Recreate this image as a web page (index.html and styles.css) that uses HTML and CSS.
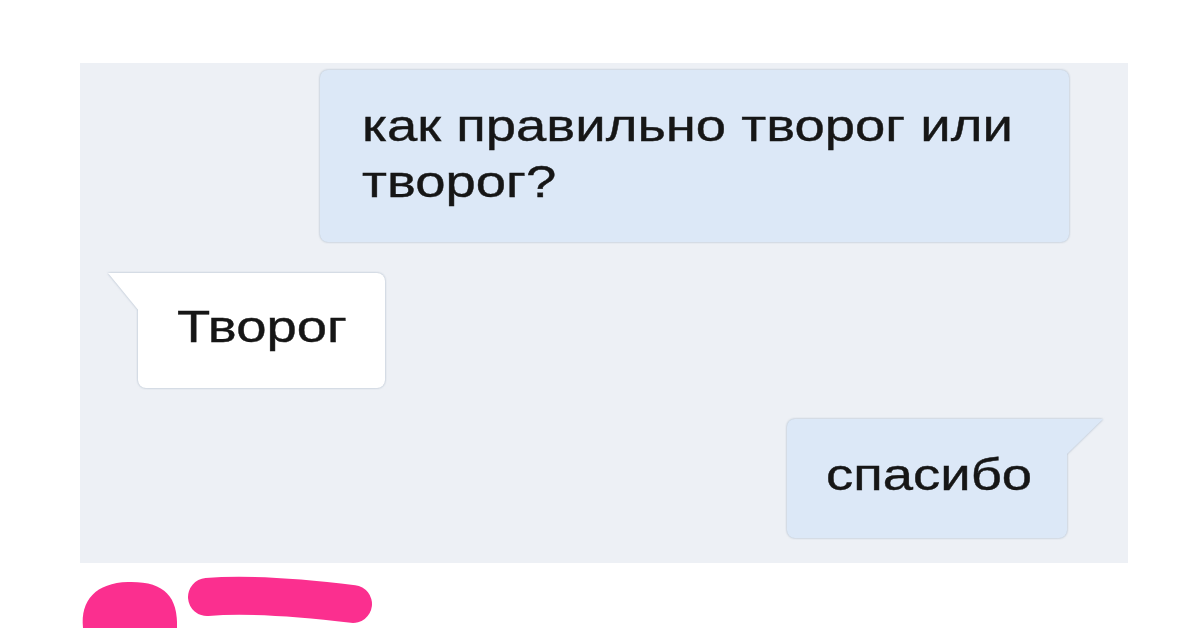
FILE: index.html
```html
<!DOCTYPE html>
<html lang="ru">
<head>
    <meta charset="UTF-8">
    <title>Творог</title>
    <link rel="stylesheet" href="styles.css">
</head>
<body>
    <div class="chat">
        <div class="row row-out">
            <div class="bubble bubble-out bubble-wide">
                <span class="text text-wrap">как правильно творог или творог?</span>
            </div>
        </div>
        <div class="row row-in">
            <div class="bubble bubble-in"><span class="text">Творог</span></div>
        </div>
        <div class="row row-out">
            <div class="bubble bubble-out bubble-tail"><span class="text">спасибо</span></div>
        </div>
    </div>
    <!-- pink marker over the hidden name -->
    <svg class="scribble" width="400" height="62" viewBox="0 0 400 62">
        <path d="M83 62 C80 34 96 17 128 16 C164 15 178 30 177 62 Z" fill="#fb2f8f"/>
        <path d="M207 31 C245 28 295 31 353 38" stroke="#fb2f8f" stroke-width="38" stroke-linecap="round" fill="none"/>
    </svg>
</body>
</html>
```

FILE: styles.css
```css
/* page is white, the chat is a grey panel */
body {
    margin: 0;
    background: #ffffff;
    font-family: 'Liberation Sans', Arial, sans-serif;
    color: #161616;
}
.chat {
    margin: 63px 72px 0 80px;
    height: 500px;
    box-sizing: border-box;
    padding: 7px 0 0 0;
    background: #edf0f5;
    display: flex;
    flex-direction: column;
    gap: 31px;
}
.row {
    display: flex;
}
.row-out {
    justify-content: flex-end;
}
.row-in {
    justify-content: flex-start;
}
.bubble {
    position: relative;
    box-sizing: border-box;
    border-radius: 8px;
    font-size: 45px;
    line-height: 56px;
    filter: drop-shadow(0 0 1px rgba(120, 140, 165, 0.6));
}
/* the screenshot is stretched sideways, so is the text */
.text {
    display: inline-block;
    transform: scaleX(1.21);
    transform-origin: left top;
    white-space: nowrap;
    -webkit-text-stroke: 0.4px #161616;
}
.text-wrap {
    white-space: normal;
    width: 560px;
}
.bubble-out {
    background: #dce8f7;
}
.bubble-wide {
    width: 749px;
    height: 172px;
    margin-right: 59px;
    padding: 28px 40px 0 42px;
}
.bubble-in {
    background: #ffffff;
    width: 247px;
    height: 115px;
    margin-left: 58px;
    padding: 26px 0 0 39px;
    border-top-left-radius: 0;
}
/* little tail on the incoming bubble */
.bubble-in::before {
    content: "";
    position: absolute;
    left: -30px;
    top: 0;
    width: 31px;
    height: 38px;
    background: #ffffff;
    clip-path: polygon(0 0, 100% 0, 100% 100%);
}
.bubble-tail {
    width: 280px;
    height: 119px;
    margin-right: 61px;
    padding: 28px 0 0 39px;
    border-top-right-radius: 0;
}
.bubble-tail::after {
    content: "";
    position: absolute;
    right: -36px;
    top: 0;
    width: 37px;
    height: 36px;
    background: #dce8f7;
    clip-path: polygon(0 0, 100% 0, 0 100%);
}
.scribble {
    display: block;
    margin-top: 3px;
}
```
